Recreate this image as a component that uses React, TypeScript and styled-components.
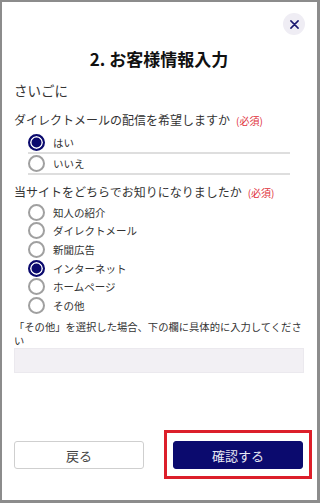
import React from "react";
import styled, { createGlobalStyle } from "styled-components";

const Global = createGlobalStyle`
  html, body { margin: 0; padding: 0; background: #ffffff; }
  body { font-family: "Noto Sans CJK JP", "Noto Sans", sans-serif; color: #222; }
  * { box-sizing: border-box; }
`;

const Frame = styled.div`
  width: 320px;
  height: 503px;
  border-style: solid;
  border-color: #8c8c8c;
  border-width: 2px 3px 3px 2px;
  background: #fff;
  display: flex;
  flex-direction: column;
  padding: 11px 13px 31px 12px;
`;

const TopBar = styled.div`
  display: flex;
  justify-content: flex-end;
  margin-right: -1px;
`;

const CloseButton = styled.button`
  width: 22px;
  height: 22px;
  border-radius: 50%;
  border: none;
  background: #efedf4;
  display: flex;
  align-items: center;
  justify-content: center;
  padding: 0;
  cursor: pointer;
`;

const Title = styled.h1`
  margin: 12px 0 0;
  font-size: 17px;
  line-height: 24px;
  font-weight: 700;
  text-align: center;
  color: #111;
`;

const Section = styled.div`
  margin-top: 10px;
  font-size: 13.5px;
  line-height: 18px;
  color: #333;
`;

const Question = styled.div<{ $gap: number }>`
  margin-top: ${(p) => p.$gap}px;
  font-size: 12px;
  line-height: 18px;
  color: #333;
  display: flex;
  align-items: baseline;
`;

const Required = styled.span`
  margin-left: 6px;
  font-size: 10px;
  color: #e0303a;
`;

const Group = styled.div<{ $gap: number }>`
  margin-top: ${(p) => p.$gap}px;
  display: flex;
  flex-direction: column;
`;

const Row = styled.label<{ $lined?: boolean }>`
  display: flex;
  align-items: center;
  gap: 8px;
  margin-left: 14px;
  width: 262px;
  height: ${(p) => (p.$lined ? "21px" : "18.6px")};
  border-bottom: ${(p) => (p.$lined ? "2px solid #dedede" : "none")};
  font-size: 10.5px;
  color: #333;
`;

const Radio = styled.span<{ $on?: boolean }>`
  width: 17px;
  height: 17px;
  flex: none;
  border-radius: 50%;
  border: 2px solid ${(p) => (p.$on ? "#0b0a6e" : "#a0a0a0")};
  background: ${(p) => (p.$on ? "#0b0a6e" : "#fff")};
  box-shadow: ${(p) => (p.$on ? "inset 0 0 0 1.5px #fff" : "none")};
`;

const Note = styled.p`
  margin: 5px 0 0;
  font-size: 10.3px;
  line-height: 14px;
  color: #333;
  width: 291px;
`;

const Input = styled.div`
  height: 25px;
  width: 290px;
  background: #f2f0f4;
  border: 1px solid #ebe9ee;
`;

const Footer = styled.div`
  margin-top: auto;
  display: flex;
  gap: 29px;
`;

const Button = styled.button<{ $primary?: boolean }>`
  width: 130px;
  height: 28px;
  border-radius: 3px;
  font-family: "Noto Sans CJK JP", sans-serif;
  font-size: 13px;
  border: 1.5px solid ${(p) => (p.$primary ? "#0b0a6e" : "#cfcfcf")};
  background: ${(p) => (p.$primary ? "#0b0a6e" : "#fff")};
  color: ${(p) => (p.$primary ? "#e8e8f4" : "#444")};
  padding: 0;
`;

const Highlight = styled.div`
  position: relative;
  &::after {
    content: "";
    position: absolute;
    left: -9px;
    right: -9px;
    top: -11px;
    bottom: -10px;
    border: 3px solid #dc1f2a;
    pointer-events: none;
  }
`;

const q2 = ["知人の紹介", "ダイレクトメール", "新聞広告", "インターネット", "ホームページ", "その他"];

export default function App() {
  return (
    <>
      <Global />
      <Frame>
        <TopBar>
          <CloseButton aria-label="close">
            <svg width="9" height="9" viewBox="0 0 10 10">
              <path d="M1 1L9 9M9 1L1 9" stroke="#1a1870" strokeWidth="1.7" strokeLinecap="round" />
            </svg>
          </CloseButton>
        </TopBar>
        <Title>2. お客様情報入力</Title>
        <Section>さいごに</Section>
        <Question $gap={12}>
          ダイレクトメールの配信を希望しますか<Required>(必須)</Required>
        </Question>
        <Group $gap={3}>
          <Row $lined>
            <Radio $on />
            はい
          </Row>
          <Row $lined>
            <Radio />
            いいえ
          </Row>
        </Group>
        <Question $gap={8}>
          当サイトをどちらでお知りになりましたか<Required>(必須)</Required>
        </Question>
        <Group $gap={1}>
          {q2.map((t) => (
            <Row key={t}>
              <Radio $on={t === "インターネット"} />
              {t}
            </Row>
          ))}
        </Group>
        <Note>「その他」を選択した場合、下の欄に具体的に入力してください</Note>
        <Input />
        <Footer>
          <Button>戻る</Button>
          <Highlight>
            <Button $primary>確認する</Button>
          </Highlight>
        </Footer>
      </Frame>
    </>
  );
}
